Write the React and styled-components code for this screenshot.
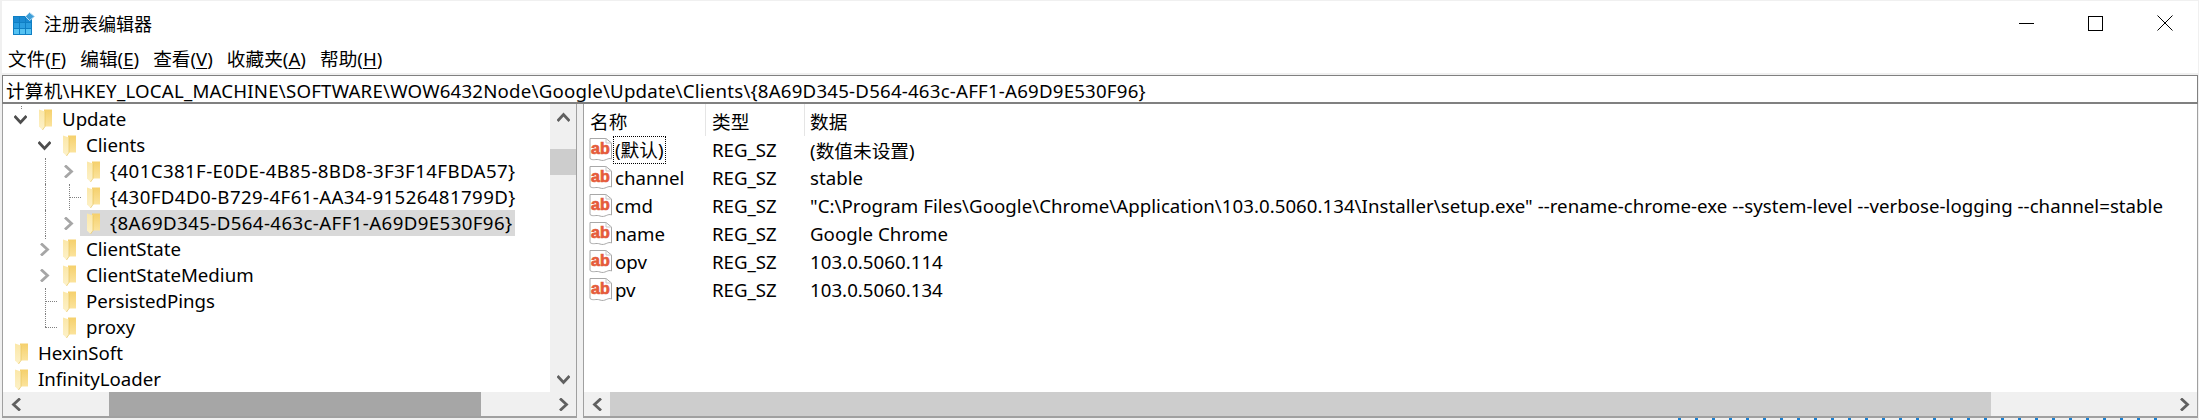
import styled, { createGlobalStyle } from "styled-components";

const GlobalStyle = createGlobalStyle`
  html, body {
    margin: 0;
    padding: 0;
    background: #f0f0f0;
  }
`;

const uiFont = `"Noto Sans", "Noto Sans CJK SC", sans-serif`;

const Window = styled.div`
  width: 2199px;
  height: 420px;
  overflow: hidden;
  display: flex;
  flex-direction: column;
  box-sizing: border-box;
  background: #f0f0f0;
  font-family: ${uiFont};
  font-size: 18.67px;
  color: #000;
`;

const Header = styled.div`
  height: 72px;
  margin: 1px 1px 0 2px;
  background: #fff;
  display: flex;
  flex-direction: column;
`;

const TitleBar = styled.div`
  height: 44px;
  display: flex;
  align-items: center;
  padding-left: 11px;
`;

const Title = styled.span`
  margin-left: 9px;
  font-size: 18px;
  white-space: nowrap;
`;

const WindowButtons = styled.div`
  margin-left: auto;
  display: flex;
  align-items: center;
  gap: 54px;
  padding-right: 25px;
`;

const MenuBar = styled.div`
  display: flex;
  gap: 14px;
  padding-left: 6px;
  height: 24px;
  align-items: center;
`;

const MenuItem = styled.span`
  white-space: nowrap;
  u {
    text-underline-offset: 2px;
  }
`;

const AddressBar = styled.div`
  margin: 2px 1px 0 2px;
  height: 29px;
  box-sizing: border-box;
  border: 1px solid #808080;
  border-bottom-width: 2px;
  background: #fff;
  padding-left: 3px;
  display: flex;
  align-items: center;
  white-space: nowrap;
  letter-spacing: 0.21px;
`;

const Panes = styled.div`
  height: 314px;
  flex: none;
  display: flex;
  gap: 6px;
  margin-left: 2px;
  margin-right: 1px;
`;

const Pane = styled.div`
  box-sizing: border-box;
  width: ${(p) => p.$width}px;
  height: 100%;
  background: #fff;
  border-left: 1px solid #a0a0a0;
  border-right: 1px solid #a0a0a0;
  border-bottom: 2px solid #a0a0a0;
  display: flex;
  flex-direction: column;
  overflow: hidden;
`;

const PaneBody = styled.div`
  flex: 1;
  min-height: 0;
  display: flex;
`;

const TreeList = styled.div`
  flex: 1;
  padding-top: 2px;
  overflow: hidden;
`;

const TreeRow = styled.div`
  position: relative;
  height: 26px;
  display: flex;
  align-items: center;
`;

const TreeCell = styled.div`
  margin-left: ${(p) => p.$indent}px;
  padding-left: ${(p) => (p.$selected ? 6 : 0)}px;
  display: flex;
  align-items: center;
  height: 26px;
  padding-right: 2px;
  background: ${(p) => (p.$selected ? "#d9d9d9" : "transparent")};
  white-space: nowrap;
`;

const TreeLabel = styled.span`
  margin: 0 0 2px 9px;
  letter-spacing: ${(p) => (p.$guid ? 0.4 : 0)}px;
`;

const Arrow = styled.span`
  position: absolute;
  left: ${(p) => p.$left}px;
  top: 7px;
  display: flex;
`;

const GuideV = styled.i`
  position: absolute;
  left: ${(p) => p.$left}px;
  top: ${(p) => p.$top ?? 0}px;
  height: ${(p) => p.$height ?? 26}px;
  border-left: 1px dotted #808080;
`;

const GuideH = styled.i`
  position: absolute;
  left: ${(p) => p.$left}px;
  top: 13px;
  width: ${(p) => p.$width}px;
  border-top: 1px dotted #808080;
`;

const ScrollV = styled.div`
  width: 26px;
  background: #f0f0f0;
  display: flex;
  flex-direction: column;
  align-items: center;
`;

const ScrollVButton = styled.div`
  height: 26px;
  width: 100%;
  display: flex;
  align-items: center;
  justify-content: center;
  flex: none;
`;

const ScrollVThumb = styled.div`
  width: 100%;
  height: 26px;
  margin-top: 19px;
  background: #cdcdcd;
`;

const Spacer = styled.div`
  flex: 1;
`;

const ScrollH = styled.div`
  height: 24px;
  flex: none;
  background: #f0f0f0;
  display: flex;
  align-items: stretch;
`;

const ScrollHButton = styled.div`
  width: 26px;
  flex: none;
  display: flex;
  align-items: center;
  justify-content: center;
`;

const ScrollHGap = styled.div`
  flex: none;
  width: ${(p) => p.$width}px;
`;

const ScrollHThumb = styled.div`
  width: ${(p) => p.$width}px;
  flex: none;
  background: ${(p) => p.$color};
`;

const ValueTable = styled.div`
  flex: 1;
  min-height: 0;
  overflow: hidden;
`;

const ColumnHeader = styled.div`
  height: 32px;
  display: grid;
  grid-template-columns: 122px 99px 1fr;
`;

const ColumnTitle = styled.div`
  display: flex;
  align-items: center;
  padding-left: 6px;
  border-right: 1px solid #e5e5e5;
  &:last-child {
    border-right: 0;
    padding-left: 5px;
  }
`;

const ValueRow = styled.div`
  height: 28px;
  display: grid;
  grid-template-columns: 122px 99px 1fr;
  align-items: center;
  white-space: nowrap;
`;

const NameCell = styled.div`
  display: flex;
  align-items: center;
  padding-left: 4px;
`;

const ValueName = styled.span`
  margin-left: 1px;
  padding: 0 1px;
  line-height: 26px;
  outline: ${(p) => (p.$focused ? "1px dotted #000" : "none")};
`;

const TypeCell = styled.div`
  padding-left: 6px;
  margin-bottom: 1px;
`;

const DataCell = styled.div`
  padding-left: 5px;
  margin-bottom: 1px;
  letter-spacing: 0.03px;
`;

// the window behind shows through in the last pixels of the capture
const BehindStrip = styled.div`
  flex: 1;
  margin-left: 1678px;
  width: 492px;
  background: repeating-linear-gradient(90deg, #1b7fd0 0 3px, transparent 3px 17px);
`;

function WinIcon() {
  return (
    <svg width="22" height="23" viewBox="0 0 22 23">
      <rect x="0" y="4" width="19" height="19" fill="#0f7fc4" />
      {[0, 1, 2].map((r) =>
        [0, 1, 2].map((c) => (
          <rect
            key={`${r}-${c}`}
            x={1 + c * 6}
            y={5 + r * 6}
            width="5"
            height="5"
            fill={r === 2 ? "#55c2f2" : r === 1 ? "#2b9ee0" : "#1a8ad2"}
          />
        ))
      )}
      <path d="M16.5 0.5 L21.5 4.5 L16.5 8.5 L12.5 4.5 Z" fill="#3f9fd8" stroke="#b9dcf2" />
    </svg>
  );
}

function Folder() {
  return (
    <svg width="15" height="23" viewBox="0 0 15 23" style={{ flex: "none" }}>
      <defs>
        <linearGradient id="folderBack" x1="0" y1="0" x2="0" y2="1">
          <stop offset="0" stopColor="#f5d06c" />
          <stop offset="1" stopColor="#fbe39c" />
        </linearGradient>
        <linearGradient id="folderFlap" x1="0" y1="0" x2="0" y2="1">
          <stop offset="0" stopColor="#fbe7a8" />
          <stop offset="1" stopColor="#fdf1c8" />
        </linearGradient>
      </defs>
      <path d="M6 1.5 H14 V18.5 H6 Z" fill="url(#folderBack)" />
      <path d="M1 1.5 L7 3.5 V18.5 L4.5 22 L1 18.5 Z" fill="url(#folderFlap)" />
      <path d="M7 3.5 V18.5 L4.5 22" fill="none" stroke="#e8c560" strokeWidth="0.7" />
    </svg>
  );
}

function Chevron({ dir, color }) {
  const paths = {
    right: "M3 0.5 L9.5 6.5 L3 12.5",
    left: "M10 0.5 L3.5 6.5 L10 12.5",
    down: "M0.5 3 L6.5 9.5 L12.5 3",
    up: "M0.5 10 L6.5 3.5 L12.5 10",
  };
  return (
    <svg width="13" height="13" viewBox="0 0 13 13">
      <path d={paths[dir]} fill="none" stroke={color} strokeWidth="2.8" />
    </svg>
  );
}

function AbIcon() {
  return (
    <svg width="25" height="26" viewBox="0 0 25 26" style={{ flex: "none" }}>
      <path
        d="M2 1.5 H18 L23.5 6 V22 C20 20 17 25 12 23 C8 21.5 5 24 2 21.5 Z"
        fill="#fff"
        stroke="#a8a8a8"
      />
      <path d="M18 1.5 V6 H23.5" fill="none" stroke="#c8c8c8" />
      <text
        x="3"
        y="17"
        fontFamily="Liberation Sans, sans-serif"
        fontWeight="700"
        fontSize="16"
        fill="#e55b3a"
        stroke="#e55b3a"
        strokeWidth="0.7"
      >
        ab
      </text>
    </svg>
  );
}

const treeRows = [
  { label: "Update", indent: 35, arrow: { dir: "down", left: 11, color: "#4d4d4d" }, v: [{ left: 18, height: 3 }] },
  { label: "Clients", indent: 59, arrow: { dir: "down", left: 35, color: "#4d4d4d" } },
  {
    label: "{401C381F-E0DE-4B85-8BD8-3F3F14FBDA57}",
    guid: true,
    indent: 83,
    arrow: { dir: "right", left: 59, color: "#a6a6a6" },
    v: [{ left: 42 }],
  },
  {
    label: "{430FD4D0-B729-4F61-AA34-91526481799D}",
    guid: true,
    indent: 83,
    v: [{ left: 42 }, { left: 66 }],
    h: { left: 66, width: 12 },
  },
  {
    label: "{8A69D345-D564-463c-AFF1-A69D9E530F96}",
    guid: true,
    indent: 77,
    selected: true,
    arrow: { dir: "right", left: 59, color: "#a6a6a6" },
    v: [{ left: 42 }],
  },
  { label: "ClientState", indent: 59, arrow: { dir: "right", left: 35, color: "#a6a6a6" }, v: [{ left: 42, height: 3 }] },
  { label: "ClientStateMedium", indent: 59, arrow: { dir: "right", left: 35, color: "#a6a6a6" } },
  { label: "PersistedPings", indent: 59, v: [{ left: 42 }], h: { left: 42, width: 12 } },
  { label: "proxy", indent: 59, v: [{ left: 42, height: 13 }], h: { left: 42, width: 12 } },
  { label: "HexinSoft", indent: 11 },
  { label: "InfinityLoader", indent: 11 },
];

const values = [
  { name: "(默认)", data: "(数值未设置)", focused: true },
  { name: "channel", data: "stable" },
  {
    name: "cmd",
    data: '"C:\\Program Files\\Google\\Chrome\\Application\\103.0.5060.134\\Installer\\setup.exe" --rename-chrome-exe --system-level --verbose-logging --channel=stable',
  },
  { name: "name", data: "Google Chrome" },
  { name: "opv", data: "103.0.5060.114" },
  { name: "pv", data: "103.0.5060.134" },
];

function App() {
  return (
    <Window>
      <GlobalStyle />
      <Header>
        <TitleBar>
          <WinIcon />
          <Title>注册表编辑器</Title>
          <WindowButtons>
            <svg width="15" height="15" viewBox="0 0 15 15">
              <path d="M0 7.5 H15" stroke="#000" />
            </svg>
            <svg width="15" height="15" viewBox="0 0 15 15">
              <rect x="0.5" y="0.5" width="14" height="14" fill="none" stroke="#000" />
            </svg>
            <svg width="16" height="16" viewBox="0 0 16 16">
              <path d="M0.5 0.5 L15.5 15.5 M15.5 0.5 L0.5 15.5" stroke="#000" />
            </svg>
          </WindowButtons>
        </TitleBar>
        <MenuBar>
          <MenuItem>文件(<u>F</u>)</MenuItem>
          <MenuItem>编辑(<u>E</u>)</MenuItem>
          <MenuItem>查看(<u>V</u>)</MenuItem>
          <MenuItem>收藏夹(<u>A</u>)</MenuItem>
          <MenuItem>帮助(<u>H</u>)</MenuItem>
        </MenuBar>
      </Header>
      <AddressBar>
        计算机\HKEY_LOCAL_MACHINE\SOFTWARE\WOW6432Node\Google\Update\Clients\{"{8A69D345-D564-463c-AFF1-A69D9E530F96}"}
      </AddressBar>
      <Panes>
        <Pane $width={575}>
          <PaneBody>
            <TreeList>
              {treeRows.map((row) => (
                <TreeRow key={row.label}>
                  {row.v?.map((g, i) => (
                    <GuideV key={i} $left={g.left} $top={g.top} $height={g.height} />
                  ))}
                  {row.h && <GuideH $left={row.h.left} $width={row.h.width} />}
                  {row.arrow && (
                    <Arrow $left={row.arrow.left}>
                      <Chevron dir={row.arrow.dir} color={row.arrow.color} />
                    </Arrow>
                  )}
                  <TreeCell $indent={row.indent} $selected={row.selected}>
                    <Folder />
                    <TreeLabel $guid={row.guid}>{row.label}</TreeLabel>
                  </TreeCell>
                </TreeRow>
              ))}
            </TreeList>
            <ScrollV>
              <ScrollVButton>
                <Chevron dir="up" color="#606060" />
              </ScrollVButton>
              <ScrollVThumb />
              <Spacer />
              <ScrollVButton>
                <Chevron dir="down" color="#606060" />
              </ScrollVButton>
            </ScrollV>
          </PaneBody>
          <ScrollH>
            <ScrollHButton>
              <Chevron dir="left" color="#606060" />
            </ScrollHButton>
            <ScrollHGap $width={80} />
            <ScrollHThumb $width={372} $color="#a6a6a6" />
            <Spacer />
            <ScrollHButton>
              <Chevron dir="right" color="#606060" />
            </ScrollHButton>
          </ScrollH>
        </Pane>
        <Pane $width={1615}>
          <ValueTable>
            <ColumnHeader>
              <ColumnTitle>名称</ColumnTitle>
              <ColumnTitle>类型</ColumnTitle>
              <ColumnTitle>数据</ColumnTitle>
            </ColumnHeader>
            {values.map((v) => (
              <ValueRow key={v.name}>
                <NameCell>
                  <AbIcon />
                  <ValueName $focused={v.focused}>{v.name}</ValueName>
                </NameCell>
                <TypeCell>REG_SZ</TypeCell>
                <DataCell>{v.data}</DataCell>
              </ValueRow>
            ))}
          </ValueTable>
          <ScrollH>
            <ScrollHButton>
              <Chevron dir="left" color="#606060" />
            </ScrollHButton>
            <ScrollHThumb $width={1381} $color="#cdcdcd" />
            <Spacer />
            <ScrollHButton>
              <Chevron dir="right" color="#606060" />
            </ScrollHButton>
          </ScrollH>
        </Pane>
      </Panes>
      <BehindStrip />
    </Window>
  );
}

export default App;
